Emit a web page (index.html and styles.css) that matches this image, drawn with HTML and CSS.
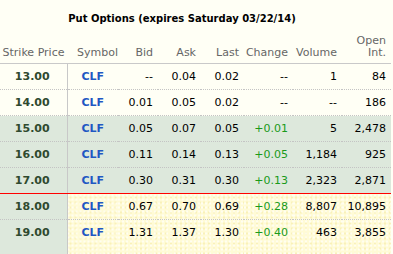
FILE: index.html
```html
<!DOCTYPE html>
<html>
<head>
<meta charset="utf-8">
<link rel="stylesheet" href="styles.css">
</head>
<body>
<div class="title">Put Options (expires Saturday 03/22/14)</div>
<table class="chain">
  <colgroup>
    <col class="c-strike"><col class="c-sym"><col class="c-bid"><col class="c-ask"><col class="c-last"><col class="c-chg"><col class="c-vol"><col class="c-oi">
  </colgroup>
  <thead>
    <tr>
      <th class="strike">Strike Price</th>
      <th class="sym">Symbol</th>
      <th>Bid</th>
      <th>Ask</th>
      <th>Last</th>
      <th>Change</th>
      <th>Volume</th>
      <th>Open<br>Int.</th>
    </tr>
  </thead>
  <tbody>
    <tr class="otm">
      <td class="strike">13.00</td><td class="sym">CLF</td><td>--</td><td>0.04</td><td>0.02</td><td>--</td><td>1</td><td>84</td>
    </tr>
    <tr class="otm">
      <td class="strike">14.00</td><td class="sym">CLF</td><td>0.01</td><td>0.05</td><td>0.02</td><td>--</td><td>--</td><td>186</td>
    </tr>
    <tr class="itm">
      <td class="strike">15.00</td><td class="sym">CLF</td><td>0.05</td><td>0.07</td><td>0.05</td><td class="up">+0.01</td><td>5</td><td>2,478</td>
    </tr>
    <tr class="itm">
      <td class="strike">16.00</td><td class="sym">CLF</td><td>0.11</td><td>0.14</td><td>0.13</td><td class="up">+0.05</td><td>1,184</td><td>925</td>
    </tr>
    <tr class="itm last-itm">
      <td class="strike">17.00</td><td class="sym">CLF</td><td>0.30</td><td>0.31</td><td>0.30</td><td class="up">+0.13</td><td>2,323</td><td>2,871</td>
    </tr>
    <tr class="hi">
      <td class="strike">18.00</td><td class="sym">CLF</td><td>0.67</td><td>0.70</td><td>0.69</td><td class="up">+0.28</td><td>8,807</td><td>10,895</td>
    </tr>
    <tr class="hi tall">
      <td class="strike">19.00</td><td class="sym">CLF</td><td>1.31</td><td>1.37</td><td>1.30</td><td class="up">+0.40</td><td>463</td><td>3,855</td>
    </tr>
  </tbody>
</table>
</body>
</html>
```
FILE: styles.css
```css
html, body {
  margin: 0;
  padding: 0;
  background: #fffff5;
  font-family: "DejaVu Sans", Verdana, sans-serif;
  font-size: 11px;
  color: #000;
  overflow: hidden;
}

.title {
  height: 22px;
  padding: 12px 29px 0 0;
  line-height: 14px;
  text-align: center;
  font-weight: bold;
  font-size: 10px;
  color: #000;
}

.chain {
  border-collapse: collapse;
  table-layout: fixed;
  width: 391px;
}

.c-strike { width: 67px; }
.c-sym { width: 51px; }
.c-bid { width: 40px; }
.c-ask { width: 43px; }
.c-last { width: 43px; }
.c-chg { width: 49px; }
.c-vol { width: 49px; }
.c-oi { width: 49px; }

.chain th {
  font-weight: normal;
  color: #666;
  line-height: 12px;
  padding: 1px 5px 4px 0;
  text-align: right;
  vertical-align: bottom;
  border-bottom: 1px solid #c9c9c9;
  white-space: nowrap;
}

.chain th.strike {
  text-align: center;
  padding: 1px 0 4px 0;
}

.chain th.sym {
  text-align: left;
  padding-left: 10px;
}

.chain td {
  height: 25px;
  padding: 0 5px 0 0;
  text-align: right;
  vertical-align: middle;
  border-bottom: 1px dotted #c4c4c4;
  white-space: nowrap;
}

.chain td.strike {
  text-align: center;
  padding-right: 2px;
  font-weight: bold;
  color: #2f4a2f;
  border-right: 1px solid #c8c8c8;
}

.chain td.sym {
  text-align: left;
  padding-left: 14px;
  font-weight: bold;
  color: #1f57c3;
}

.chain td.up {
  color: #1a9a1a;
}

.itm td {
  background: #dde8dc;
}

.chain .last-itm td {
  border-bottom: 1px solid #ff0000;
}

.hi td {
  background-color: #fffbd6;
  background-image:
    radial-gradient(circle at 1px 1px, rgba(255,255,255,0.9) 0.6px, transparent 1px),
    radial-gradient(circle at 3px 3px, rgba(245,235,170,0.9) 0.6px, transparent 1px);
  background-size: 4px 4px, 5px 5px;
}

.chain .hi td.strike {
  background: #dde8dc;
}

.chain .tall td {
  height: 40px;
  vertical-align: top;
  padding-top: 6px;
  border-bottom: none;
}
```
